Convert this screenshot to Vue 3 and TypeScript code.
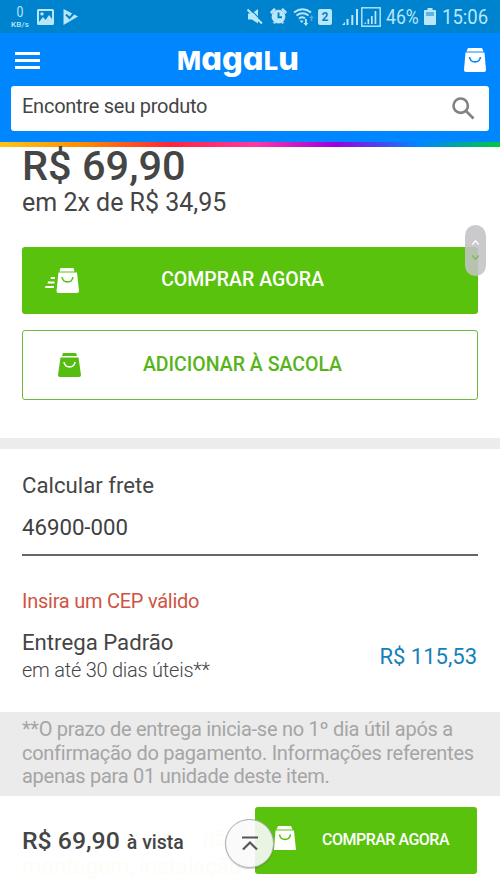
<script setup lang="ts">
import { ref } from 'vue'

const cep = ref('46900-000')
const price = 'R$ 69,90'
</script>

<template>
  <div class="screen">
    <div class="status">
      <div class="net"><b>0</b><span>KB/s</span></div>
      <svg class="pic" width="17" height="16" viewBox="0 0 17 16"><path fill-rule="evenodd" d="M1.500 0h14A1.500 1.500 0 0 1 17 1.500v13A1.500 1.500 0 0 1 15.500 16h-14A1.500 1.500 0 0 1 0 14.500v-13A1.500 1.500 0 0 1 1.500 0zM2 2v11l4-5 2.500 3L12 6l3 4V2zM5 3.200a1.700 1.700 0 1 1 0 3.400a1.700 1.700 0 0 1 0-3.400z" /></svg>
      <svg class="play" width="15" height="16" viewBox="0 0 15 16"><path d="M.5 0L15 7.500.5 16z" /><path class="cut" d="M3 5.500l3.500 3.500L12 3" /></svg>
      <div class="grow"></div>
      <svg class="mute" width="17" height="17" viewBox="0 0 17 17"><path d="M1 5.500h4L11 1v14.500L5 11.500H1z" /><path class="gap" d="M2 0l15 15" /><path class="ln" d="M.5 1.500l14.500 14" /></svg>
      <svg class="alarm" width="17" height="17" viewBox="0 0 17 17"><path d="M0 4l4-4 2 1.500L1.500 6zM17 4l-4-4-2 1.500L15.500 6zM2.500 14l2 2 2-1.500zM14.500 14l-2 2-2-1.500z" /><circle cx="8.500" cy="8.700" r="6.900" /><path class="cut" d="M8.500 4.500v4.800h3.500" /></svg>
      <svg class="wifi" width="21" height="18" viewBox="0 0 21 18"><g class="ln"><path d="M1 4.500Q9.500-2 18 4.500M3.500 7.500q6-4.500 12 0M6 10.500q3.500-2.500 6 0" /></g><path d="M6.500 12.500h4L9 15zM12 11h1.800v4h1.500l-2.400 3-2.400-3H12z" /><path class="faint" d="M18.500 7l2.300 3h-1.500v3h-1.500v-3h-1.500z" /></svg>
      <div class="sim">2</div>
      <svg class="bars" width="17" height="16" viewBox="0 0 17 16"><path d="M0 16l3-3v3zM4.500 10h2v6h-2zM9.300 6h2v10h-2zM14 0h2v16h-2z" /></svg>
      <svg class="bars2" width="20" height="20" viewBox="0 0 20 20"><rect class="box" x=".8" y=".8" width="18.400" height="18.400" /><path d="M3 17l2-2v2zM6.500 12h1.700v5H6.500zM10 9h1.700v8H10zM13.600 4h1.700v13h-1.700z" /></svg>
      <span class="pct">46%</span>
      <svg class="batt" width="12" height="17" viewBox="0 0 12 17"><path d="M3.500 0h5v2H11a1 1 0 0 1 1 1v13a1 1 0 0 1-1 1H1a1 1 0 0 1-1-1V3a1 1 0 0 1 1-1h2.500z" /><path class="empty" d="M2 4h8v4H2z" /></svg>
      <span class="clock">15:06</span>
    </div>

    <header>
      <div class="bar">
        <div class="burger"><i></i><i></i><i></i></div>
        <div class="logo"><span>M</span>aga<span>L</span>u</div>
        <svg class="bag" width="22" height="24" viewBox="0 0 22 24"><path d="M4 0h14l1.500 3.500h-17z" /><path d="M1.500 4.500h19L22 22a2 2 0 0 1-2 2H2a2 2 0 0 1-2-2z" /><path class="smile" d="M5.500 9c1 6.500 10 6.500 11 0" /></svg>
      </div>
      <div class="search">
        <span>Encontre seu produto</span>
        <svg width="23" height="23" viewBox="0 0 23 23"><circle cx="8.700" cy="8.700" r="7.200" /><path d="M14 14l7.500 7.500" /></svg>
      </div>
    </header>
    <div class="rainbow"></div>

    <main>
      <section class="buy">
        <div class="price">{{ price }}</div>
        <div class="parc">em 2x de R$ 34,95</div>
        <button class="btn solid">
          <svg width="34" height="25" viewBox="0 0 34 25"><path d="M15.500 0h13l1 3.500H14.500z" /><path d="M13.500 4.500h18.500L34 23a2 2 0 0 1-2 2H13.500a2 2 0 0 1-2-2zM6 9h4v2H5.500zM3 13.500h6.500v2H2.500zM.5 18H9v2H0z" /><path class="smile" d="M17 9c1 6.500 10 6.500 11 0" /></svg>
          <span>COMPRAR AGORA</span>
        </button>
        <button class="btn line">
          <svg width="23" height="24" viewBox="0 0 23 24"><path d="M5 0h13l1 3H4z" /><path d="M2.500 4.500h18L23 22a2 2 0 0 1-2 2H2a2 2 0 0 1-2-2z" /><path class="smile" d="M6 9c1 6.500 10 6.500 11 0" /></svg>
          <span>ADICIONAR À SACOLA</span>
        </button>
      </section>

      <section class="frete">
        <label for="cep">Calcular frete</label>
        <input id="cep" v-model="cep" />
        <p class="error">Insira um CEP válido</p>
        <div class="ship">
          <div>
            <div class="kind">Entrega Padrão</div>
            <div class="days">em até 30 dias úteis**</div>
          </div>
          <span class="cost">R$ 115,53</span>
        </div>
      </section>

      <div class="note">
        <div>**O prazo de entrega inicia-se no 1º dia útil após a</div>
        <div>confirmação do pagamento. Informações referentes</div>
        <div>apenas para 01 unidade deste item.</div>
      </div>
    </main>

    <footer>
      <div class="behind"><div class="tail">não</div><div>montagem, instalação</div></div>
      <div class="total"><b>{{ price }}</b><span>à vista</span></div>
      <button class="cta">
        <svg width="22" height="24" viewBox="0 0 22 24"><path d="M4 0h13l1.500 3.500h-16z" /><path d="M1.500 4.500h18.500L22 24H0z" /><path class="smile" d="M5.500 8.500c1 6.500 10 6.500 11 0" /></svg>
        <span>COMPRAR AGORA</span>
      </button>
      <div class="top"><svg width="18" height="16" viewBox="0 0 18 16"><path d="M1 1.500h16M2 13.500l7-7 7 7" /></svg></div>
    </footer>

    <div class="scroller">
      <svg width="9" height="24" viewBox="0 0 9 24"><path d="M1 6l3.500-4L8 6" /><path class="dn" d="M1 18l3.500 4L8 18" /></svg>
    </div>
  </div>
</template>

<style>
body { margin: 0; overflow: hidden; }
</style>

<style scoped>
* { box-sizing: border-box; }
.screen { position: relative; width: 500px; height: 889px; overflow: hidden; display: flex; flex-direction: column; background: #fff; color: #454545; font-family: Roboto, "Liberation Sans", sans-serif; white-space: nowrap; }
svg { display: block; flex: none; }
button { border: 0; margin: 0; font-family: inherit; }
.status { height: 33px; flex: none; display: flex; align-items: center; background: #0083cf; color: #b9e6f8; padding: 0 13px 0 10px; }
.status svg { fill: #b9e6f8; }
.status .cut { fill: none; stroke: #0083cf; stroke-width: 2; }
.status .gap { fill: none; stroke: #0083cf; stroke-width: 1.200; }
.status .ln { fill: none; stroke: #b9e6f8; stroke-width: 2; }
.status .box { fill: none; stroke: #b9e6f8; stroke-width: 1.4; }
.status .empty { fill: #5cb4e0; }
.status .faint { fill: #4fadde; }
.net { width: 20px; display: flex; flex-direction: column; align-items: center; font-size: 8px; line-height: 9px; font-weight: 500; }
.net b { font-size: 14.500px; line-height: 15px; font-weight: 400; transform: scaleX(.85); }
.net span { letter-spacing: .2px; }
.pic { margin-left: 7px; }
.play { margin-left: 9px; }
.grow { flex: 1; }
.alarm { margin-left: 6px; }
.wifi { margin-left: 6px; }
.sim { width: 14px; height: 16px; margin-left: 4px; background: #b9e6f8; color: #0083cf; border-radius: 2px; font-size: 12px; line-height: 16px; text-align: center; font-weight: 700; }
.bars { margin-left: 10px; }
.bars2 { margin-left: 2px; }
.pct, .clock { display: block; flex: none; font-size: 21px; transform-origin: 0 50%; transform: scaleX(.84); }
.pct { width: 33px; margin-left: 5px; }
.batt { margin-left: 5px; }
.clock { width: 45px; margin-left: 6px; transform: scaleX(.88); }
header { height: 109px; flex: none; background: #0086ff; padding: 0 11px; }
.bar { height: 53px; display: flex; justify-content: space-between; align-items: flex-start; padding: 0 3px 0 4px; }
.burger { display: flex; flex-direction: column; gap: 4px; padding-top: 19px; }
.burger i { width: 25px; height: 3px; background: #fff; }
.logo { width: 122px; height: 50px; margin: 1px 28px 0 0; font: 800 32.500px/50px Inter, sans-serif; font-feature-settings: "cv11"; color: #fff; letter-spacing: .1px; }
.logo span { font-size: 25.500px; }
.bag { margin-top: 15px; fill: #fff; }
.smile { fill: none; stroke-width: 1.6; }
.bag .smile { stroke: #0086ff; }
.search { height: 45px; display: flex; justify-content: space-between; background: #fff; border-radius: 3px; padding: 11px 14px 0 11px; font-size: 20px; line-height: 18px; letter-spacing: -.25px; }
.search svg { fill: none; stroke: #828282; stroke-width: 2.600; }
.rainbow { height: 5px; flex: none; background: linear-gradient(90deg, #fcc41a, #ff8a00 17%, #ff253a 34%, #ff37a8 51%, #9b00e1 67%, #0086ff 84%, #00c93c); }
main { flex: 1; }
.buy { height: 291px; padding: 1px 22px 0; }
.price { font-size: 41.500px; line-height: 36px; font-weight: 500; }
.parc { font-size: 25px; line-height: 37px; height: 63px; }
.btn { position: relative; width: 456px; display: flex; align-items: center; justify-content: center; border-radius: 3px; font-weight: 500; font-size: 19.500px; padding: 0 0 3px; }
.solid { height: 67px; background: #59c20c; color: #fff; }
.line { height: 70px; margin-top: 16px; padding-bottom: 2px; background: #fff; color: #56b41a; border: 1.500px solid #6db83f; }
.btn svg { position: absolute; left: 23px; top: 21px; fill: #fff; }
.solid .smile { stroke: #59c20c; }
.line svg { left: 35px; top: 22px; fill: #55bc10; }
.line .smile { stroke: #fff; }
.btn span { margin-left: -15px; }
.frete { height: 274px; border-top: 11px solid #ececec; padding: 24px 22px 0; }
label { display: block; font-size: 22.200px; line-height: 24px; }
input { display: block; width: 456px; height: 59px; padding: 2px 0 0; border: 0; border-bottom: 2px solid #666; outline: 0; background: none; font: 22.200px Roboto, sans-serif; color: #404040; }
.error { margin: 33px 0 0; font-size: 20px; line-height: 24px; letter-spacing: -.25px; color: #cf5443; }
.ship { display: flex; justify-content: space-between; align-items: center; margin-top: 15px; }
.kind { font-size: 22.200px; line-height: 28px; }
.days { font-size: 20px; line-height: 29px; letter-spacing: -.24px; font-weight: 300; }
.cost { font-size: 22px; margin: 0 1px 1px 0; color: #1380bb; }
.note { height: 84px; background: #ebebeb; color: #a5a5a5; padding: 6px 22px; font-size: 20px; line-height: 23.600px; letter-spacing: -.27px; }
footer { position: relative; height: 93px; flex: none; background: #fff; display: flex; justify-content: space-between; padding: 11px 23px 0 22px; }
.behind { position: absolute; left: 22px; top: 28px; font-size: 22.200px; line-height: 28px; color: #fdfdf8; }
.tail { padding-left: 181px; }
.total { position: relative; display: flex; align-items: baseline; gap: 7px; height: 67px; line-height: 67px; font-weight: 500; }
.total b { font-size: 24.800px; font-weight: 500; }
.total span { font-size: 19.500px; }
.cta { position: relative; width: 222px; height: 67px; display: flex; align-items: center; padding: 0 0 3px 19px; gap: 26px; background: #59c20c; border-radius: 3px; color: #fff; font-weight: 500; font-size: 16px; letter-spacing: -.5px; }
.cta svg { fill: #fff; margin-top: -3px; }
.cta .smile { stroke: #59c20c; }
.top { position: absolute; left: 225px; top: 23px; width: 49px; height: 49px; border-radius: 50%; border: 1px solid #aaa; background: rgba(250,250,250,.9); display: flex; align-items: center; justify-content: center; box-shadow: 0 1px 1px rgba(0,0,0,.2); }
.top svg { fill: none; stroke: #555; stroke-width: 2.200; }
.scroller { position: absolute; left: 465px; top: 225px; width: 21px; height: 51px; border-radius: 10.500px; background: rgba(195,195,198,.88); display: flex; align-items: center; justify-content: center; }
.scroller svg { margin-top: -2px; height: 22px; fill: none; stroke: #fff; stroke-width: 1.500; }
.scroller .dn { stroke: #82b665; }
</style>
